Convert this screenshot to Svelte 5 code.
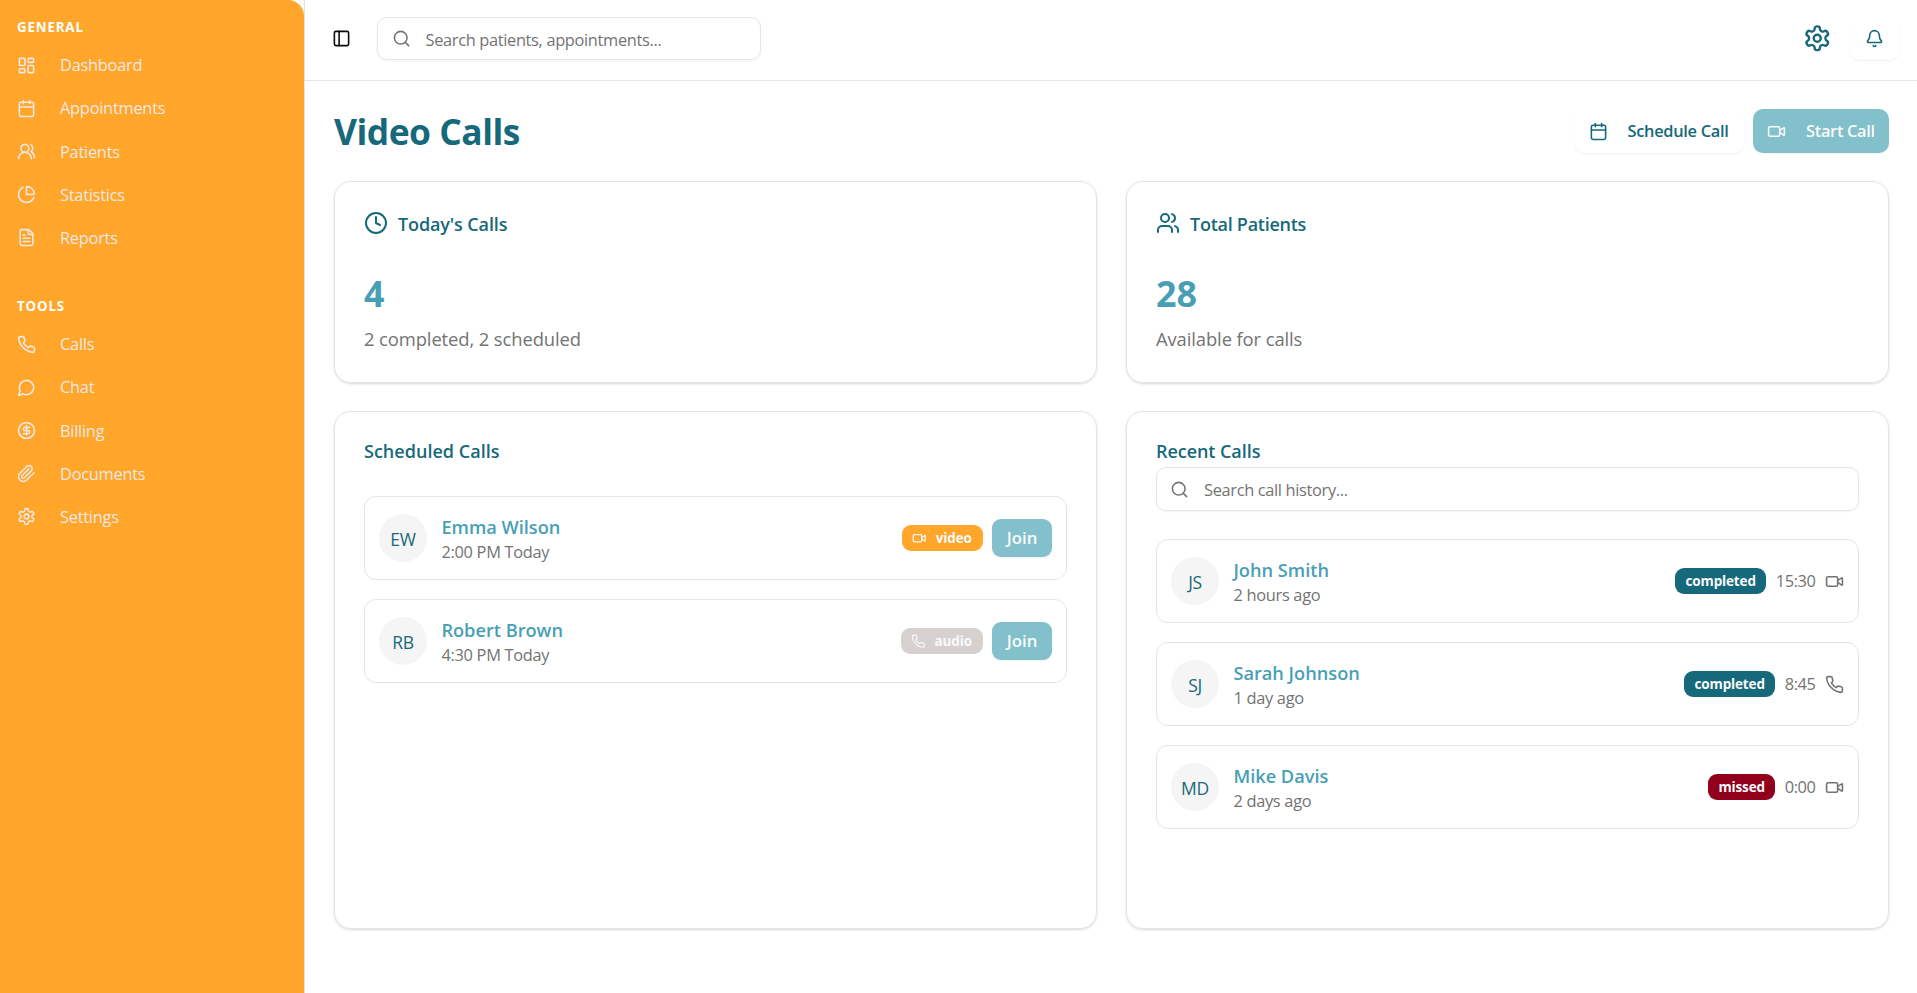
<script>
  const icons = {
    dashboard: '<rect width="7" height="9" x="3" y="3" rx="1"/><rect width="7" height="5" x="14" y="3" rx="1"/><rect width="7" height="9" x="14" y="12" rx="1"/><rect width="7" height="5" x="3" y="16" rx="1"/>',
    calendar: '<path d="M8 2v4"/><path d="M16 2v4"/><rect width="18" height="18" x="3" y="4" rx="2"/><path d="M3 10h18"/>',
    usersRound: '<path d="M18 21a8 8 0 0 0-16 0"/><circle cx="10" cy="8" r="5"/><path d="M22 20c0-3.37-2-6.5-4-8a5 5 0 0 0-.45-8.3"/>',
    pie: '<path d="M21 12c.552 0 1.005-.449.95-.998a10 10 0 0 0-8.953-8.951c-.55-.055-.998.398-.998.95v8a1 1 0 0 0 1 1z"/><path d="M21.21 15.89A10 10 0 1 1 8 2.83"/>',
    file: '<path d="M15 2H6a2 2 0 0 0-2 2v16a2 2 0 0 0 2 2h12a2 2 0 0 0 2-2V7Z"/><path d="M14 2v4a2 2 0 0 0 2 2h4"/><path d="M10 9H8"/><path d="M16 13H8"/><path d="M16 17H8"/>',
    phone: '<path d="M22 16.92v3a2 2 0 0 1-2.18 2 19.79 19.79 0 0 1-8.63-3.07 19.5 19.5 0 0 1-6-6 19.79 19.79 0 0 1-3.07-8.67A2 2 0 0 1 4.11 2h3a2 2 0 0 1 2 1.72 12.84 12.84 0 0 0 .7 2.81 2 2 0 0 1-.45 2.11L8.09 9.91a16 16 0 0 0 6 6l1.27-1.27a2 2 0 0 1 2.11-.45 12.84 12.84 0 0 0 2.81.7A2 2 0 0 1 22 16.92z"/>',
    chat: '<path d="M7.9 20A9 9 0 1 0 4 16.1L2 22Z"/>',
    dollar: '<circle cx="12" cy="12" r="10"/><path d="M16 8h-6a2 2 0 1 0 0 4h4a2 2 0 1 1 0 4H8"/><path d="M12 18V6"/>',
    clip: '<path d="m21.44 11.05-9.19 9.19a6 6 0 0 1-8.49-8.49l8.57-8.57A4 4 0 1 1 18 8.84l-8.59 8.57a2 2 0 0 1-2.83-2.83l8.49-8.48"/>',
    settings: '<path d="M12.22 2h-.44a2 2 0 0 0-2 2v.18a2 2 0 0 1-1 1.73l-.43.25a2 2 0 0 1-2 0l-.15-.08a2 2 0 0 0-2.73.73l-.22.38a2 2 0 0 0 .73 2.73l.15.1a2 2 0 0 1 1 1.72v.51a2 2 0 0 1-1 1.74l-.15.09a2 2 0 0 0-.73 2.73l.22.38a2 2 0 0 0 2.73.73l.15-.08a2 2 0 0 1 2 0l.43.25a2 2 0 0 1 1 1.73V20a2 2 0 0 0 2 2h.44a2 2 0 0 0 2-2v-.18a2 2 0 0 1 1-1.73l.43-.25a2 2 0 0 1 2 0l.15.08a2 2 0 0 0 2.73-.73l.22-.39a2 2 0 0 0-.73-2.73l-.15-.08a2 2 0 0 1-1-1.74v-.5a2 2 0 0 1 1-1.74l.15-.09a2 2 0 0 0 .73-2.73l-.22-.38a2 2 0 0 0-2.73-.73l-.15.08a2 2 0 0 1-2 0l-.43-.25a2 2 0 0 1-1-1.73V4a2 2 0 0 0-2-2z"/><circle cx="12" cy="12" r="3"/>',
    panel: '<rect width="18" height="18" x="3" y="3" rx="2"/><path d="M9 3v18"/>',
    search: '<circle cx="11" cy="11" r="8"/><path d="m21 21-4.3-4.3"/>',
    bell: '<path d="M10.268 21a2 2 0 0 0 3.464 0"/><path d="M3.262 15.326A1 1 0 0 0 4 17h16a1 1 0 0 0 .74-1.673C19.41 13.956 18 12.499 18 8A6 6 0 0 0 6 8c0 4.499-1.411 5.956-2.738 7.326"/>',
    video: '<path d="m16 13 5.223 3.482a.5.5 0 0 0 .777-.416V7.87a.5.5 0 0 0-.752-.432L16 10.5"/><rect x="2" y="6" width="14" height="12" rx="2"/>',
    clock: '<circle cx="12" cy="12" r="10"/><path d="M12 6v6l4 2"/>',
    users: '<path d="M16 21v-2a4 4 0 0 0-4-4H6a4 4 0 0 0-4 4v2"/><circle cx="9" cy="7" r="4"/><path d="M22 21v-2a4 4 0 0 0-3-3.87"/><path d="M16 3.13a4 4 0 0 1 0 7.75"/>'
  };

  const groups = [
    { label: 'GENERAL', items: [['dashboard', 'Dashboard'], ['calendar', 'Appointments'], ['usersRound', 'Patients'], ['pie', 'Statistics'], ['file', 'Reports']] },
    { label: 'TOOLS', items: [['phone', 'Calls'], ['chat', 'Chat'], ['dollar', 'Billing'], ['clip', 'Documents'], ['settings', 'Settings']] }
  ];
  const scheduled = [
    { initials: 'EW', name: 'Emma Wilson', time: '2:00 PM Today', kind: 'video', icon: 'video' },
    { initials: 'RB', name: 'Robert Brown', time: '4:30 PM Today', kind: 'audio', icon: 'phone' }
  ];
  const recent = [
    { initials: 'JS', name: 'John Smith', time: '2 hours ago', status: 'completed', length: '15:30', icon: 'video' },
    { initials: 'SJ', name: 'Sarah Johnson', time: '1 day ago', status: 'completed', length: '8:45', icon: 'phone' },
    { initials: 'MD', name: 'Mike Davis', time: '2 days ago', status: 'missed', length: '0:00', icon: 'video' }
  ];
</script>

{#snippet icon(name, size = 19, stroke = 2)}
  <svg width={size} height={size} viewBox="0 0 24 24" fill="none" stroke="currentColor" stroke-width={stroke} stroke-linecap="round" stroke-linejoin="round">{@html icons[name]}</svg>
{/snippet}

{#snippet person(p)}
  <div class="avatar">{p.initials}</div>
  <div class="who">
    <div class="name">{p.name}</div>
    <div class="when">{p.time}</div>
  </div>
{/snippet}

<div class="app">
  <div class="side-wrap">
    <nav class="sidebar">
      {#each groups as g}
        <section class="group">
          <h2>{g.label}</h2>
          {#each g.items as [ic, label]}
            <div class="item">{@render icon(ic)}<span>{label}</span></div>
          {/each}
        </section>
      {/each}
    </nav>
  </div>

  <div class="main">
    <header>
      <span class="toggle">{@render icon('panel')}</span>
      <div class="field top-search">{@render icon('search')}<span>Search patients, appointments...</span></div>
      <span class="gear">{@render icon('settings', 28.5)}</span>
      <div class="bell">{@render icon('bell')}</div>
    </header>

    <main>
      <div class="title-row">
        <h1>Video Calls</h1>
        <div class="btn outline">{@render icon('calendar')}<span>Schedule Call</span></div>
        <div class="btn primary">{@render icon('video')}<span>Start Call</span></div>
      </div>

      <div class="cards">
        <div class="card stat">
          <h3>{@render icon('clock', 24)}<span class="today">Today's Calls</span></h3>
          <div class="number">4</div>
          <p>2 completed, 2 scheduled</p>
        </div>
        <div class="card stat">
          <h3>{@render icon('users', 24)}<span>Total Patients</span></h3>
          <div class="number">28</div>
          <p>Available for calls</p>
        </div>

        <div class="card list">
          <h3 class="upcoming">Scheduled Calls</h3>
          <div class="rows scheduled">
            {#each scheduled as p}
              <div class="row">
                {@render person(p)}
                <div class="badge {p.kind}">{@render icon(p.icon, 14.5)}<span>{p.kind}</span></div>
                <div class="join">Join</div>
              </div>
            {/each}
          </div>
        </div>
        <div class="card list">
          <h3>Recent Calls</h3>
          <div class="field history">{@render icon('search')}<span>Search call history...</span></div>
          <div class="rows">
            {#each recent as p}
              <div class="row">
                {@render person(p)}
                <div class="badge {p.status}"><span>{p.status}</span></div>
                <div class="length">{p.length}</div>
                <span class="type">{@render icon(p.icon)}</span>
              </div>
            {/each}
          </div>
        </div>
      </div>
    </main>
  </div>
</div>

<style>
  :global(body) { background: #fff; }
  .app, .app :global(*) { box-sizing: border-box; }
  .app {
    display: flex;
    width: 100%;
    height: 993px;
    overflow: hidden;
    font-family: "Segoe UI", "Open Sans", "Noto Sans", sans-serif;
    color: #16697a;
    white-space: nowrap;
  }
  svg { display: block; flex: none; }
  h1, h2, h3, p { margin: 0; }

  .side-wrap { width: 305px; flex: none; background: #fafafa; border-right: 1px solid #e5e5e5; }
  .sidebar { height: 100%; background: #ffa62b; border-top-right-radius: 16px; padding: 9.5px 17px; }
  .group { height: 279px; }
  h2 { height: 34px; line-height: 34px; font-size: 13.3px; font-weight: 700; letter-spacing: 0.85px; color: #fff; }
  .item { height: 43.2px; display: flex; align-items: center; gap: 24px; color: #ede7e3; font-size: 16.4px; letter-spacing: -0.26px; }
  .item span { padding-bottom: 0.9px; }

  .main { flex: 1; min-width: 0; }
  header { height: 81px; border-bottom: 1px solid #e5e5e5; display: flex; align-items: center; padding: 0 18px 4px 27px; }
  .toggle { color: #0a0a0a; margin-right: 26px; }
  .field { display: flex; align-items: center; border: 1px solid #e5e5e5; border-radius: 10px; gap: 15px; padding-left: 13.5px; color: #737373; font-size: 16.4px; letter-spacing: -0.34px; box-shadow: 0 1px 2px rgba(0, 0, 0, 0.05); }
  .top-search { width: 384px; height: 43px; }
  .top-search span { padding-top: 2px; }
  .gear { margin-left: auto; margin-right: 19px; }
  .bell { width: 49px; height: 43px; border-radius: 10px; display: flex; align-items: center; justify-content: center; box-shadow: 0 1px 2px rgba(0, 0, 0, 0.06); }

  main { padding: 28px 28px 0 29px; }
  .title-row { display: flex; align-items: center; height: 44px; gap: 9px; }
  h1 { font-size: 35.4px; font-weight: 700; letter-spacing: -0.5px; margin-right: auto; line-height: 44px; padding-top: 0.6px; }
  .btn { height: 44px; border-radius: 10px; display: flex; align-items: center; gap: 20px; padding: 0 13.5px; font-size: 16.4px; font-weight: 600; letter-spacing: -0.3px; box-shadow: 0 1px 2px rgba(0, 0, 0, 0.06); }
  .btn span { padding-bottom: 2px; }
  .outline { width: 169px; }
  .primary { width: 136px; padding-left: 14px; background: #82c0cc; color: #fafafa; }

  .cards { margin-top: 28px; display: grid; grid-template-columns: 1fr 1fr; grid-template-rows: 202px 518px; gap: 28px 29px; }
  .card { border: 1px solid #e5e5e5; border-radius: 17px; padding: 28px 29px; box-shadow: 0 1px 3px rgba(0, 0, 0, 0.1), 0 1px 2px rgba(0, 0, 0, 0.06); }
  h3 { display: flex; align-items: center; gap: 10px; font-size: 18px; font-weight: 600; letter-spacing: -0.26px; line-height: 26px; height: 26px; }
  h3 span { padding-top: 2px; }
  .today { letter-spacing: -0.12px; }
  .number { margin-top: 38px; height: 38px; line-height: 38px; font-size: 35.8px; font-weight: 700; color: #489fb5; }
  p { margin-top: 14px; height: 26px; line-height: 26px; font-size: 18.4px; color: #737373; letter-spacing: -0.1px; }

  .list { padding-top: 25px; }
  .list h3 { height: 30px; padding-bottom: 3px; letter-spacing: -0.06px; }
  .list .upcoming { letter-spacing: 0.02px; }
  .rows { display: flex; flex-direction: column; gap: 19px; margin-top: 28px; }
  .scheduled { margin-top: 29px; }
  .history { height: 44px; padding-left: 13px; }
  .row { height: 84px; border: 1px solid #e5e5e5; border-radius: 12px; padding: 0 14px; display: flex; align-items: center; }
  .avatar { width: 48px; height: 48px; border-radius: 50%; background: #f5f5f5; display: flex; align-items: center; justify-content: center; font-size: 17.5px; letter-spacing: -0.3px; margin-right: 14.4px; padding-top: 2px; }
  .who { margin-right: auto; padding-top: 3px; }
  .name { font-size: 18.2px; font-weight: 600; color: #489fb5; line-height: 25px; letter-spacing: 0; }
  .when { font-size: 16.4px; color: #737373; line-height: 24px; letter-spacing: -0.3px; }
  .badge { height: 26px; border-radius: 9px; padding: 0 10px; display: flex; align-items: center; justify-content: center; gap: 9px; color: #fafafa; font-size: 13.5px; font-weight: 700; letter-spacing: -0.15px; }
  .badge span { padding-top: 0.5px; }
  .video { width: 81px; padding-right: 11px; background: #ffa62b; }
  .audio { width: 82px; padding-right: 11px; background: #d6d1ce; }
  .completed { width: 91px; background: #16697a; }
  .missed { width: 67px; background: #90001c; }
  .join { width: 60px; height: 38px; margin-left: 9px; padding-bottom: 1.5px; border-radius: 9px; background: #82c0cc; color: #fafafa; font-size: 16.8px; font-weight: 600; display: flex; align-items: center; justify-content: center; box-shadow: 0 1px 2px rgba(0, 0, 0, 0.06); }
  .length { margin-left: 9.5px; padding-bottom: 1px; color: #737373; font-size: 16.4px; letter-spacing: -0.4px; }
  .type { margin-left: 9.5px; color: #737373; }
</style>
